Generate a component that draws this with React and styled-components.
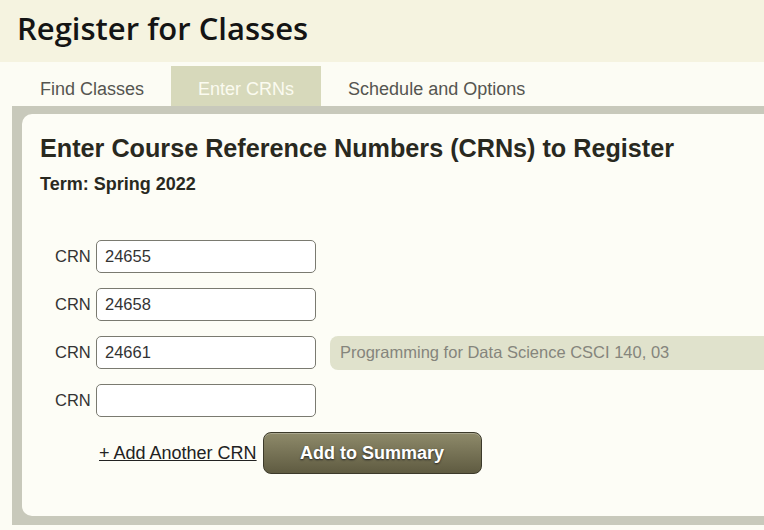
import React from "react";
import styled, { createGlobalStyle } from "styled-components";

const GlobalStyle = createGlobalStyle`
  html, body {
    margin: 0;
    padding: 0;
    background: #fcfcf4;
    overflow: hidden;
  }
  body {
    width: 764px;
    height: 530px;
  }
`;

const rows = [
  { value: "24655" },
  { value: "24658" },
  { value: "24661", course: "Programming for Data Science CSCI 140, 03" },
  { value: "" },
];

const tabs = ["Find Classes", "Enter CRNs", "Schedule and Options"];

export default function App() {
  return (
    <>
      <GlobalStyle />
      <Page>
        <Header>
          <Title>Register for Classes</Title>
        </Header>
        <TabBar>
          {tabs.map((tab) => (
            <Tab key={tab} active={tab === "Enter CRNs"}>
              {tab}
            </Tab>
          ))}
        </TabBar>
        <Frame>
          <Panel>
            <Heading>Enter Course Reference Numbers (CRNs) to Register</Heading>
            <Term>Term: Spring 2022</Term>
            <CrnList>
              {rows.map((row, index) => (
                <CrnRow key={index}>
                  <CrnLabel>CRN</CrnLabel>
                  <CrnInput defaultValue={row.value} />
                  {row.course && <CourseChip>{row.course}</CourseChip>}
                </CrnRow>
              ))}
            </CrnList>
            <Actions>
              <AddLink href="#">+ Add Another CRN</AddLink>
              <SummaryButton>Add to Summary</SummaryButton>
            </Actions>
          </Panel>
        </Frame>
      </Page>
    </>
  );
}

const Page = styled.div`
  width: 764px;
  height: 530px;
  overflow: hidden;
  font-family: "Liberation Sans", Arial, sans-serif;
`;

const Header = styled.header`
  height: 62px;
  background: #f5f3e0;
  padding-left: 17px;
  box-sizing: border-box;
`;

const Title = styled.h1`
  margin: 0;
  font-family: "Open Sans", sans-serif;
  font-weight: 600;
  font-size: 31px;
  line-height: 56px;
  color: #141414;
`;

const TabBar = styled.nav`
  display: flex;
  align-items: flex-end;
  height: 44px;
  margin-left: 13px;
  background: #fcfcf4;
`;

const Tab = styled.div`
  height: 40px;
  padding: 6px 27px 0;
  display: flex;
  align-items: center;
  box-sizing: border-box;
  font-size: 18px;
  color: ${({ active }) => (active ? "#fbfbf0" : "#555550")};
  background: ${({ active }) => (active ? "#d7d9bb" : "transparent")};
`;

const Frame = styled.section`
  margin-left: 12px;
  width: 800px;
  background: #c8c9bb;
  padding: 8px 0 9px 10px;
`;

const Panel = styled.div`
  background: #fdfdf6;
  border-radius: 10px 0 0 10px;
  height: 402px;
  padding: 20px 0 0 18px;
  box-sizing: border-box;
`;

const Heading = styled.h2`
  margin: 0;
  font-size: 25.2px;
  font-weight: 700;
  line-height: 28px;
  color: #29291f;
`;

const Term = styled.div`
  margin-top: 12px;
  font-size: 18px;
  font-weight: 700;
  color: #29291f;
`;

const CrnList = styled.div`
  display: flex;
  flex-direction: column;
  gap: 15px;
  margin-top: 45px;
  padding-left: 15px;
`;

const CrnRow = styled.div`
  display: flex;
  align-items: center;
  height: 33px;
`;

const CrnLabel = styled.span`
  font-size: 16.5px;
  color: #333;
  width: 41px;
`;

const CrnInput = styled.input`
  width: 220px;
  height: 33px;
  box-sizing: border-box;
  border: 1px solid #7a7a70;
  border-radius: 5px;
  background: #ffffff;
  padding: 0 8px;
  font-family: "Liberation Sans", Arial, sans-serif;
  font-size: 16.5px;
  color: #333;
  outline: none;
`;

const CourseChip = styled.div`
  margin-left: 14px;
  flex: 1;
  height: 34px;
  display: flex;
  align-items: center;
  padding-left: 10px;
  border-radius: 8px 0 0 8px;
  background: #e0e2cc;
  font-size: 16.5px;
  color: #85857c;
  white-space: nowrap;
`;

const Actions = styled.div`
  display: flex;
  align-items: center;
  gap: 6px;
  margin-top: 15px;
  padding-left: 59px;
`;

const AddLink = styled.a`
  font-size: 18px;
  color: #222;
  text-decoration: underline;
`;

const SummaryButton = styled.button`
  width: 219px;
  height: 42px;
  border: 1px solid #3c3a2a;
  border-radius: 8px;
  background: linear-gradient(#8e8a6a, #5f5b41);
  color: #ffffff;
  font-family: "Liberation Sans", Arial, sans-serif;
  font-size: 18px;
  font-weight: 700;
  text-shadow: 0 1px 2px #222;
  box-shadow: inset 0 1px 0 rgba(255, 255, 255, 0.25);
  cursor: pointer;
`;
